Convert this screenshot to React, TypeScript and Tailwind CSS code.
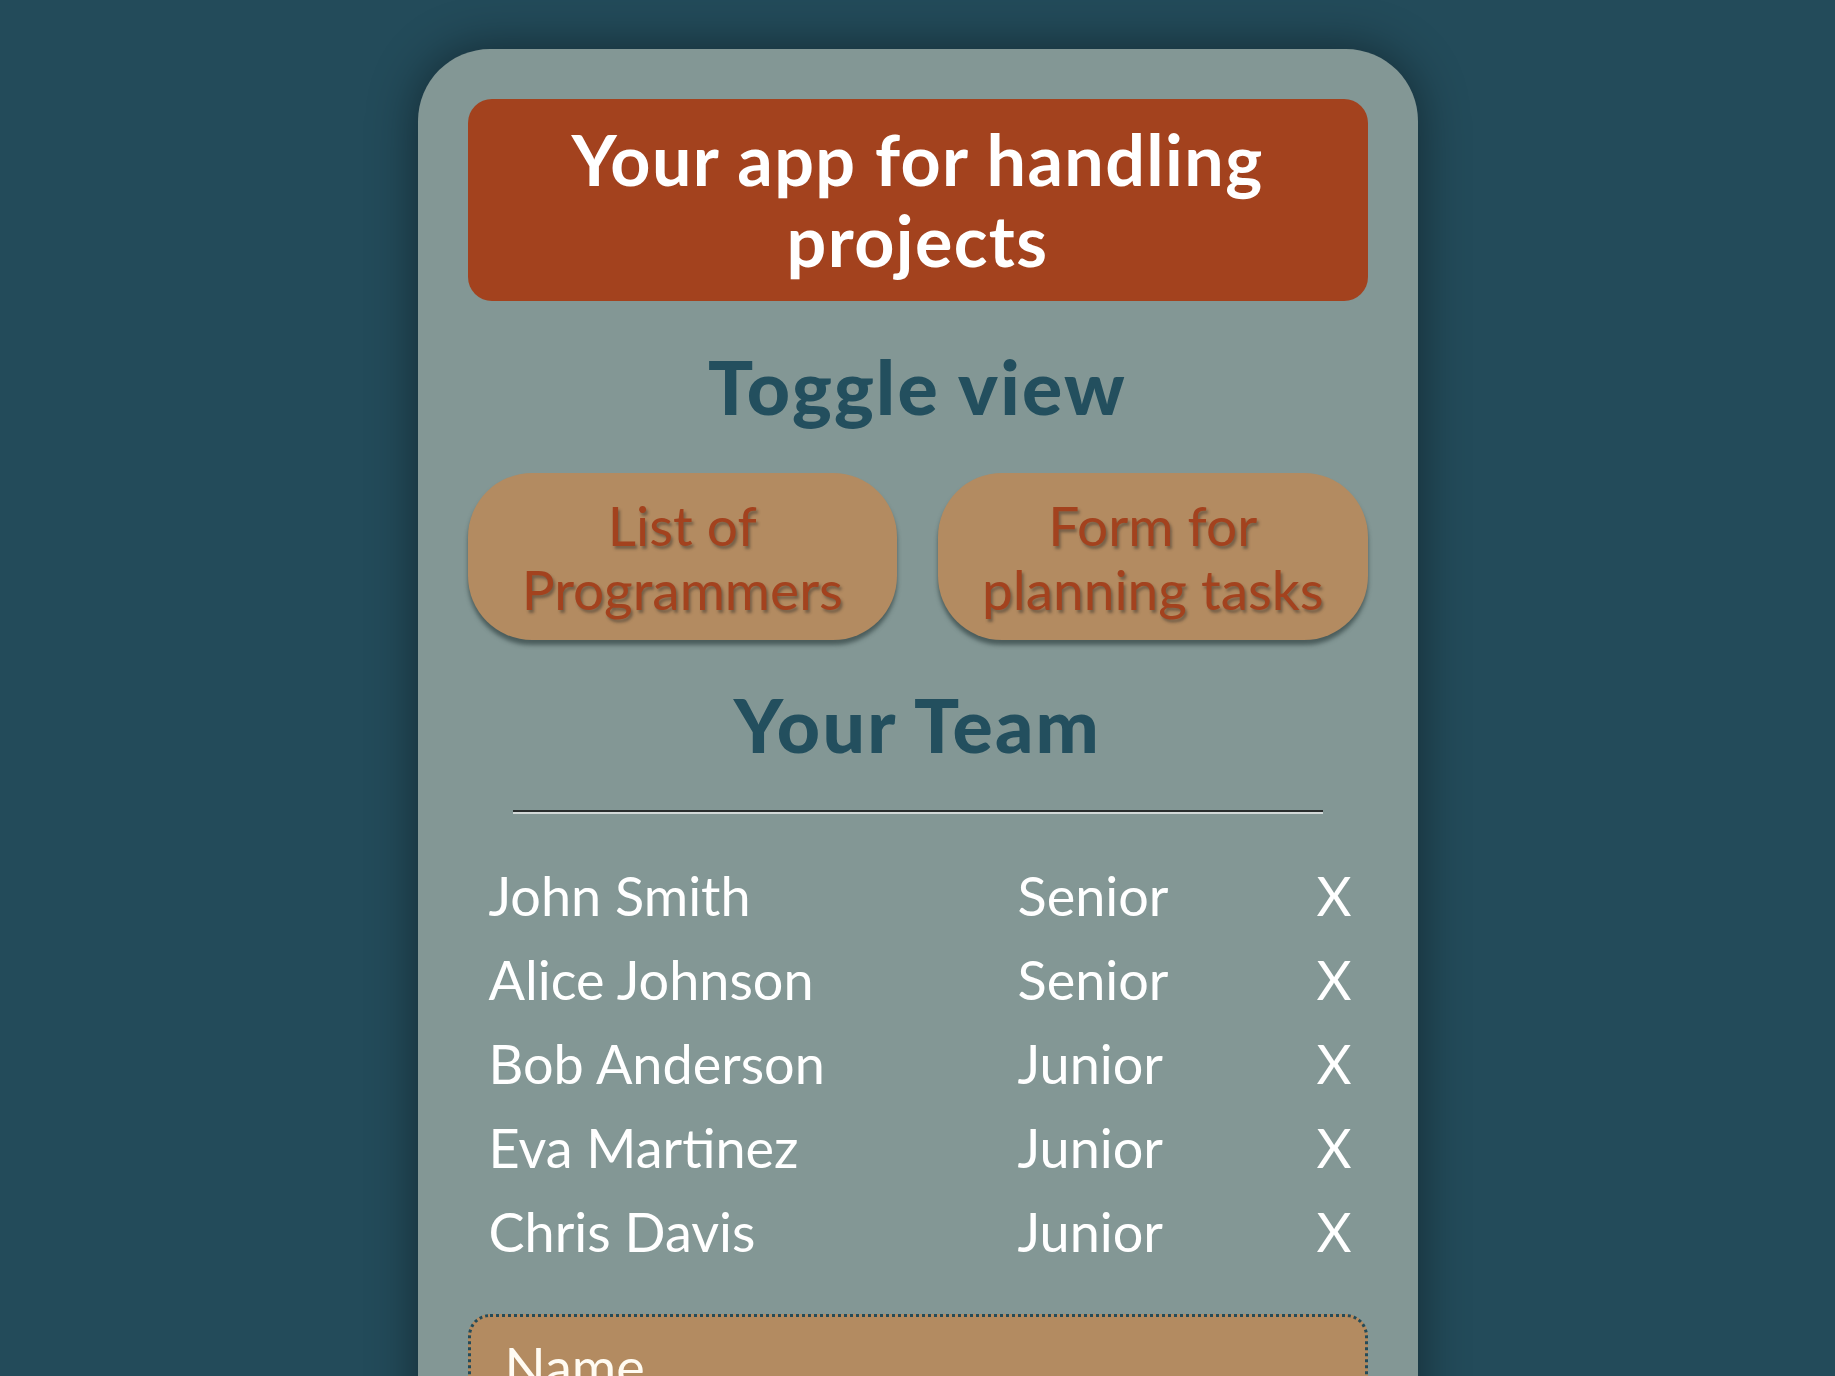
import { useState } from 'react';

type Programmer = { id: number; name: string; level: 'Senior' | 'Junior' };

const initialTeam: Programmer[] = [
  { id: 1, name: 'John Smith', level: 'Senior' },
  { id: 2, name: 'Alice Johnson', level: 'Senior' },
  { id: 3, name: 'Bob Anderson', level: 'Junior' },
  { id: 4, name: 'Eva Martinez', level: 'Junior' },
  { id: 5, name: 'Chris Davis', level: 'Junior' },
];

const views = ['List of Programmers', 'Form for planning tasks'] as const;
type View = typeof views[number];

export default function App() {
  const [team, setTeam] = useState<Programmer[]>(initialTeam);
  const [view, setView] = useState<View>('List of Programmers');
  const [name, setName] = useState('');

  return (
    <div className="flex min-h-screen justify-center bg-[#234b5a] pt-[49px] font-['Lato','Noto_Sans',sans-serif]">
      <div className="h-fit w-[1000px] rounded-[72px] bg-[#839795] p-[50px] shadow-[0_0_50px_rgba(0,0,0,0.45)]">
        <h1 className="rounded-[24px] bg-[#a3421e] px-[60px] py-[20px] text-center text-[70px] font-bold leading-[81px] tracking-[0.02em] text-white">
          Your app for handling projects
        </h1>

        <h2 className="mt-[48px] text-center text-[75px] font-black leading-none tracking-[0.03em] text-[#234f5e]">Toggle view</h2>

        <div className="mt-[49px] grid grid-cols-2 gap-[41px]">
          {views.map((item) => (
            <button
              key={item}
              className="h-[167px] rounded-[64px] bg-[#b38b61] px-8 text-[55px] leading-[64px] text-[#a3421e] shadow-[0_5px_4px_rgba(45,62,62,0.65)] [text-shadow:2px_3px_3px_rgba(40,40,40,0.45)]"
              onClick={() => setView(item)}
            >
              {item}
            </button>
          ))}
        </div>

        <h2 className="mt-[47px] text-center text-[75px] font-black leading-none tracking-[0.03em] text-[#234f5e]">Your Team</h2>

        <hr className="mx-[45px] mt-[48px] border-t-2 border-b-2 border-t-[#2a2e2e] border-b-[#d3d9d8]" />

        <div className="mt-[40px] pl-[21px] text-[54px] leading-[84px] text-white">
          {team.map((p) => (
            <div key={p.id} className="grid grid-cols-[529px_299px_1fr]">
              <span>{p.name}</span>
              <span>{p.level}</span>
              <button className="w-fit text-left" onClick={() => setTeam(team.filter((t) => t.id !== p.id))}>X</button>
            </div>
          ))}
        </div>

        <input
          className="mt-[40px] block w-full rounded-[22px] border-[3px] border-dotted border-[#234b5a] bg-[#b38b61] px-[34px] py-[14px] text-[54px] leading-[72px] text-white outline-none placeholder:text-[#fffbf2]"
          placeholder="Name"
          value={name}
          onChange={(e) => setName(e.target.value)}
        />
        <div className="h-[200px]" data-view={view} />
      </div>
    </div>
  );
}
